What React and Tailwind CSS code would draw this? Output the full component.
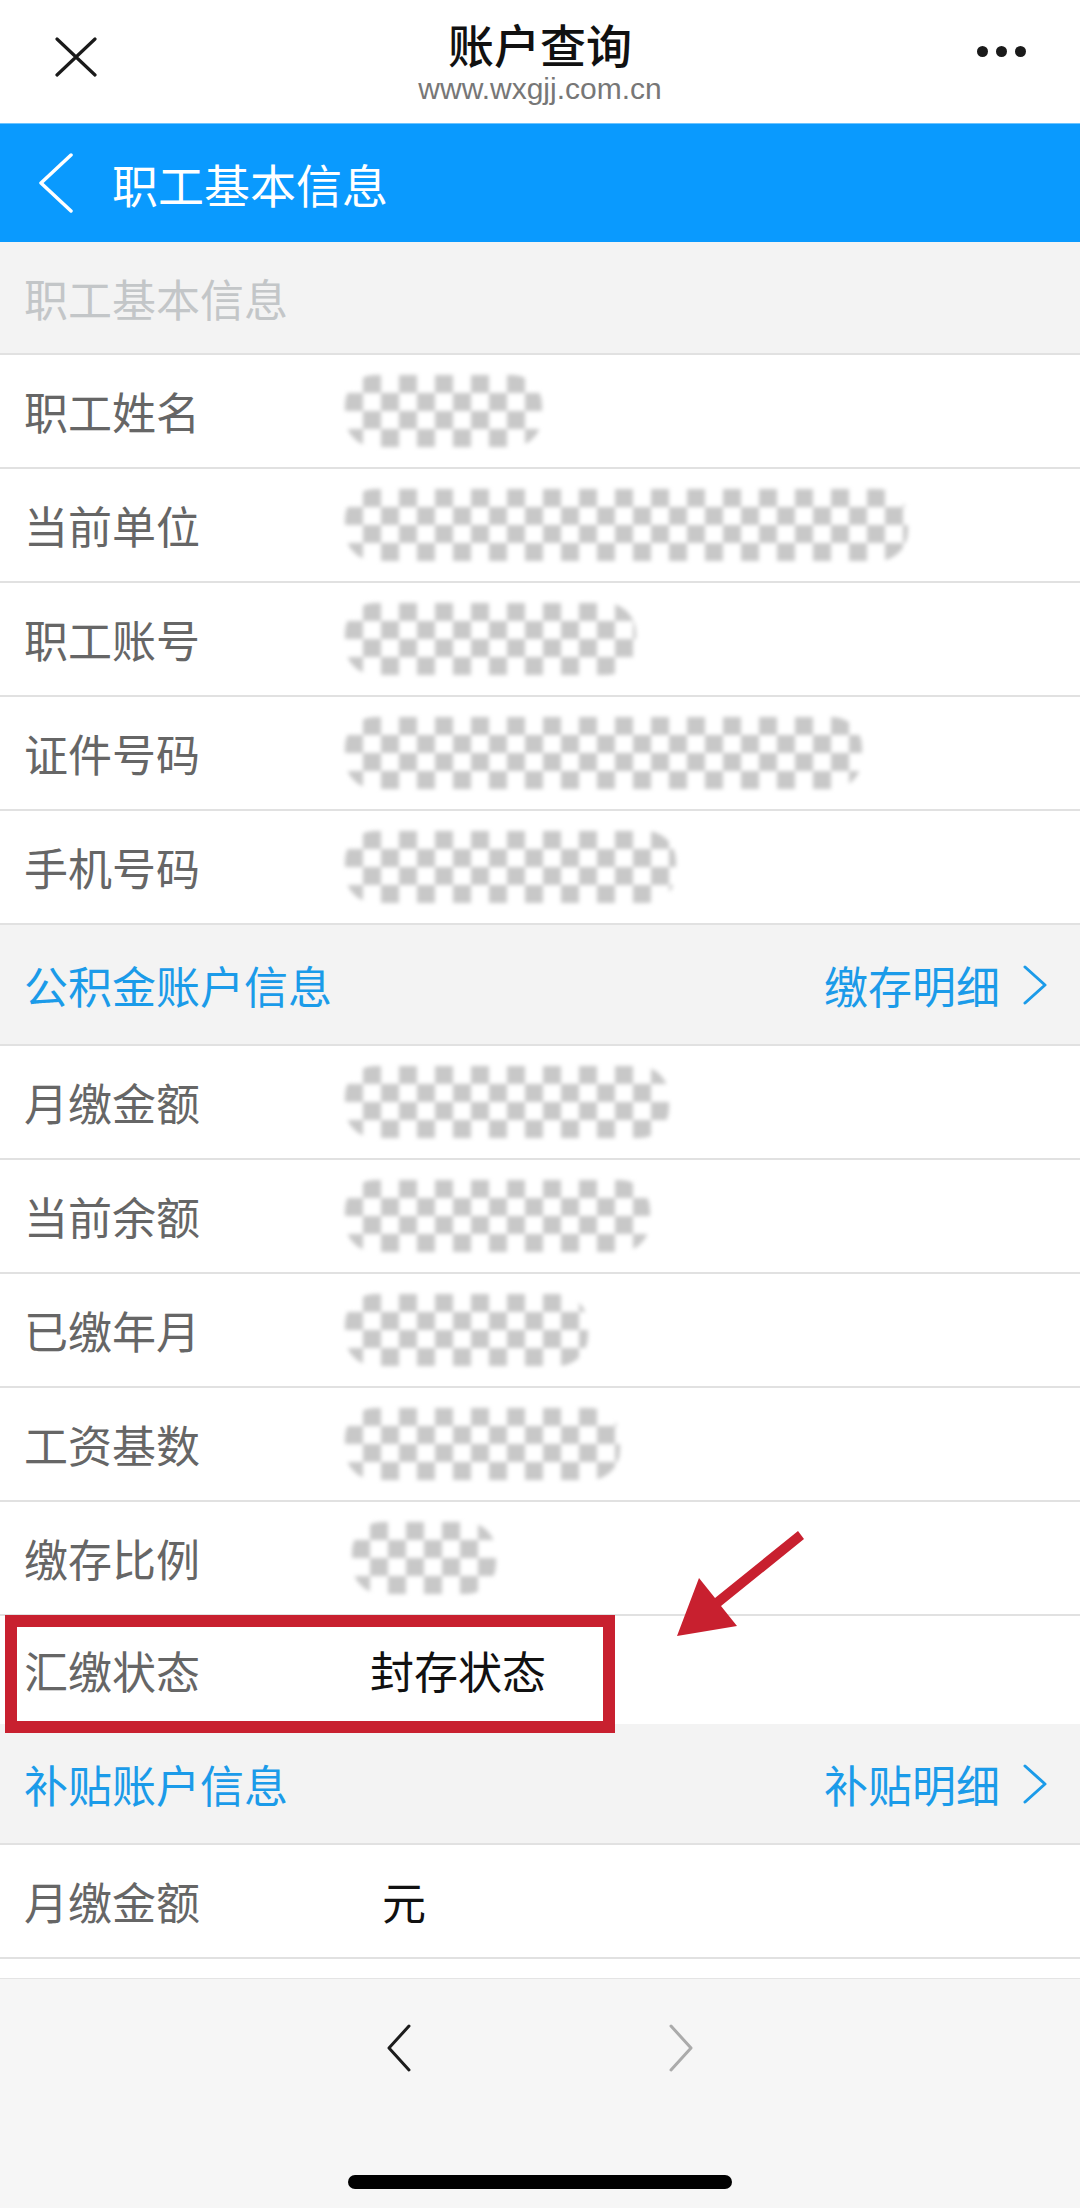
import React from 'react';

const cjk = { fontFamily: '"Noto Sans CJK SC", "Noto Sans", sans-serif' };

function Redact({ w, off = -25 }) {
  return (
    <div
      className="h-[72px] rounded-[30px] blur-[2px] bg-[conic-gradient(#c8c8c8_25%,#ffffff_0_50%,#c8c8c8_0_75%,#ffffff_0)] bg-[length:36px_36px]"
      style={{ width: w, marginLeft: off }}
    />
  );
}

function Row({ label, children, top = true }) {
  return (
    <div className={`h-[114px] bg-white flex items-center px-[24px] ${top ? 'border-t-2 border-[#e1e1e1]' : ''}`}>
      <div className="w-[346px] shrink-0 text-[44px] text-[#666666] leading-none">{label}</div>
      <div className="flex items-center">{children}</div>
    </div>
  );
}

function Chevron({ className }) {
  return (
    <svg viewBox="0 0 26 40" className={className} fill="none" stroke="currentColor" strokeWidth="3" strokeLinecap="round" strokeLinejoin="round">
      <path d="M3 2 L23 20 L3 38" />
    </svg>
  );
}

function GroupHead({ title, link }) {
  return (
    <div className="h-[121px] border-t-2 border-[#e1e1e1] bg-[#f3f3f3] flex items-center justify-between pl-[24px] pr-[32px] text-[44px] text-[#1b9be9] leading-none">
      <span>{title}</span>
      <span className="flex items-center gap-[22px]">
        {link}
        <Chevron className="w-[26px] h-[40px]" />
      </span>
    </div>
  );
}

export default function App() {
  return (
    <div className="relative w-[1080px] h-[2208px] bg-white overflow-hidden flex flex-col" style={cjk}>
      {/* wechat top bar */}
      <div className="h-[123px] shrink-0 grid grid-cols-[1fr_auto_1fr] items-center px-[54px]">
        <svg viewBox="0 0 44 40" className="w-[44px] h-[40px] -mt-[10px]" fill="none" stroke="#1a1a1a" strokeWidth="3.2" strokeLinecap="round">
          <path d="M3 2 L41 38 M41 2 L3 38" />
        </svg>
        <div className="flex flex-col items-center">
          <div className="text-[46px] leading-none text-[#111] font-medium">账户查询</div>
          <div className="mt-[8px] text-[30px] leading-none text-[#777]" style={{ fontFamily: '"Liberation Sans", sans-serif' }}>www.wxgjj.com.cn</div>
        </div>
        <div className="flex justify-end gap-[8px] -mt-[20px]">
          <span className="w-[11px] h-[11px] rounded-full bg-[#1a1a1a]" />
          <span className="w-[11px] h-[11px] rounded-full bg-[#1a1a1a]" />
          <span className="w-[11px] h-[11px] rounded-full bg-[#1a1a1a]" />
        </div>
      </div>

      {/* blue header */}
      <div className="h-[119px] shrink-0 bg-[#0a9afe] border-t border-[#6cc4ff] flex items-center pl-[38px]">
        <svg viewBox="0 0 36 60" className="w-[36px] h-[60px]" fill="none" stroke="#fff" strokeWidth="3.5" strokeLinecap="round" strokeLinejoin="round">
          <path d="M33 2 L3 30 L33 58" />
        </svg>
        <span className="ml-[38px] text-[46px] text-white leading-none">职工基本信息</span>
      </div>

      <div className="h-[111px] shrink-0 bg-[#f3f3f3] flex items-center px-[24px] text-[44px] text-[#c3c6c8] leading-none">职工基本信息</div>

      <Row label="职工姓名"><Redact w={197} /></Row>
      <Row label="当前单位"><Redact w={563} /></Row>
      <Row label="职工账号"><Redact w={291} /></Row>
      <Row label="证件号码"><Redact w={517} /></Row>
      <Row label="手机号码"><Redact w={331} /></Row>

      <GroupHead title="公积金账户信息" link="缴存明细" />

      <Row label="月缴金额"><Redact w={324} /></Row>
      <Row label="当前余额"><Redact w={305} /></Row>
      <Row label="已缴年月"><Redact w={243} /></Row>
      <Row label="工资基数"><Redact w={275} /></Row>
      <Row label="缴存比例"><Redact w={144} off={-18} /></Row>
      <div className="h-[110px] border-t-2 border-[#e1e1e1] bg-white flex items-center px-[24px]">
        <div className="w-[346px] shrink-0 text-[44px] text-[#666666] leading-none">汇缴状态</div>
        <div className="text-[44px] text-[#111] leading-none">封存状态</div>
      </div>

      <div className="h-[119px] bg-[#f3f3f3] flex items-center justify-between pl-[24px] pr-[32px] text-[44px] text-[#1b9be9] leading-none">
        <span>补贴账户信息</span>
        <span className="flex items-center gap-[22px]">
          补贴明细
          <Chevron className="w-[26px] h-[40px]" />
        </span>
      </div>

      <Row label="月缴金额"><span className="ml-[12px] text-[44px] text-[#111] leading-none">元</span></Row>
      <div className="h-[21px] border-t-2 border-[#e1e1e1] bg-white" />

      {/* bottom toolbar */}
      <div className="flex-1 bg-[#f6f6f6] border-t border-[#e4e4e4] flex flex-col items-center">
        <div className="mt-[45px] flex items-center gap-[256px]">
          <svg viewBox="0 0 26 48" className="w-[26px] h-[48px]" fill="none" stroke="#1c1c1c" strokeWidth="3" strokeLinecap="round" strokeLinejoin="round">
            <path d="M23 2 L3 24 L23 46" />
          </svg>
          <svg viewBox="0 0 26 48" className="w-[26px] h-[48px]" fill="none" stroke="#ababab" strokeWidth="3" strokeLinecap="round" strokeLinejoin="round">
            <path d="M3 2 L23 24 L3 46" />
          </svg>
        </div>
        <div className="mt-[103px] w-[384px] h-[14px] rounded-full bg-black" />
      </div>

      {/* annotation */}
      <div className="absolute left-[5px] top-[1615px] w-[610px] h-[118px] border-[12px] border-[#c8202f]" />
      <svg className="absolute left-0 top-0 pointer-events-none" width="1080" height="2208" viewBox="0 0 1080 2208">
        <polygon points="677,1636 699,1578 715,1598 798,1531 804,1539 721,1606 737,1626" fill="#c8202f" />
      </svg>
    </div>
  );
}
